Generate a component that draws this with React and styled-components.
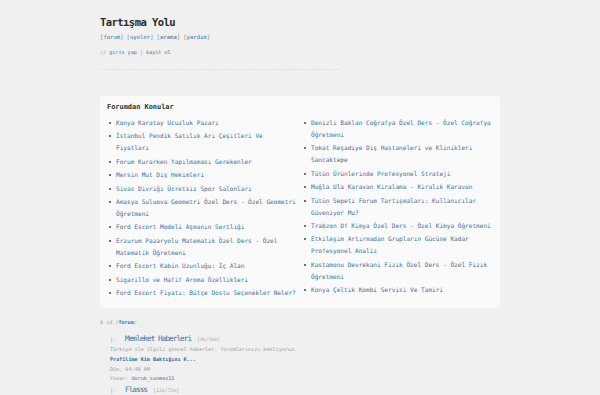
import React from "react";
import styled, { createGlobalStyle } from "styled-components";

const GlobalStyle = createGlobalStyle`
  html, body {
    margin: 0;
    padding: 0;
    background: #f0f0f0;
  }
  body {
    font-family: "DejaVu Sans Mono", "Liberation Mono", monospace;
    color: #333;
  }
`;

const leftTopics = [
  "Konya Karatay Ucuzluk Pazarı",
  "İstanbul Pendik Satılık Arı Çeşitleri Ve Fiyatları",
  "Forum Kurarken Yapılmaması Gerekenler",
  "Mersin Mut Diş Hekimleri",
  "Sivas Divriği Ücretsiz Spor Salonları",
  "Amasya Suluova Geometri Özel Ders - Özel Geometri Öğretmeni",
  "Ford Escort Modeli Aşmanın Sertliği",
  "Erzurum Pazaryolu Matematik Özel Ders - Özel Matematik Öğretmeni",
  "Ford Escort Kabin Uzunluğu: İç Alan",
  "Sigarillo ve Hafif Aroma Özellikleri",
  "Ford Escort Fiyatı: Bütçe Dostu Seçenekler Neler?",
];

const rightTopics = [
  "Denizli Baklan Coğrafya Özel Ders - Özel Coğrafya Öğretmeni",
  "Tokat Reşadiye Diş Hastaneleri ve Klinikleri Sancaktepe",
  "Tütün Ürünlerinde Profesyonel Strateji",
  "Muğla Ula Karavan Kiralama - Kiralık Karavan",
  "Tütün Sepeti Forum Tartışmaları: Kullanıcılar Güveniyor Mu?",
  "Trabzon Of Kimya Özel Ders - Özel Kimya Öğretmeni",
  "Etkileşim Artırmadan Grupların Gücüne Kadar Profesyonel Analiz",
  "Kastamonu Devrekani Fizik Özel Ders - Özel Fizik Öğretmeni",
  "Konya Çeltik Kombi Servisi Ve Tamiri",
];

const Page = styled.div`
  width: 400px;
  margin: 0 auto;
  padding-top: 15px;
`;

const Title = styled.h1`
  margin: 0;
  font-size: 10.5px;
  line-height: 14px;
  font-weight: bold;
  letter-spacing: -0.55px;
  color: #2b2b2b;
`;

const Nav = styled.div`
  margin-top: 4px;
  display: flex;
  gap: 3px;
  font-size: 5.6px;
  line-height: 8px;
  color: #8a8a8a;
`;

const NavLink = styled.a`
  color: #3a6ea5;
  text-decoration: none;
`;

const Auth = styled.div`
  margin-top: 7px;
  font-size: 5.1px;
  line-height: 8px;
  color: #999;
`;

const Divider = styled.div`
  margin-top: 9px;
  font-size: 5px;
  line-height: 8px;
  color: #b4b4b4;
  white-space: nowrap;
  overflow: hidden;
`;

const Card = styled.section`
  margin-top: 23px;
  background: #fafafa;
  border-radius: 3px;
  padding: 6px 7px 8px;
`;

const CardTitle = styled.h2`
  margin: 0;
  font-size: 7px;
  line-height: 10px;
  font-weight: bold;
  letter-spacing: -0.05px;
  color: #333;
`;

const Columns = styled.div`
  margin-top: 5px;
  display: grid;
  grid-template-columns: 191px 191px;
  gap: 4px;
`;

const TopicList = styled.ul`
  list-style: none;
  margin: 0;
  padding: 0;
`;

const Topic = styled.li`
  position: relative;
  padding-left: 9px;
  margin-bottom: 1.4px;
  font-size: 6.1px;
  line-height: 12px;

  &::before {
    content: "";
    position: absolute;
    left: 1.5px;
    top: 5px;
    width: 2px;
    height: 2px;
    border-radius: 50%;
    background: #444;
  }
`;

const TopicLink = styled.a`
  color: #3f6f9f;
  text-decoration: none;
`;

const Path = styled.div`
  margin-top: 10px;
  font-size: 5.1px;
  line-height: 8px;
  color: #999;

  b {
    color: #3a6ea5;
  }
`;

const Forum = styled.div`
  padding-left: 10px;
  margin-top: ${(p) => (p.$first ? "7px" : "0")};
`;

const ForumHead = styled.div`
  display: flex;
  align-items: baseline;
  line-height: 11px;
`;

const Branch = styled.span`
  font-size: 5.5px;
  color: #999;
  width: 15px;
`;

const ForumName = styled.a`
  font-size: 7.6px;
  letter-spacing: -0.9px;
  color: #3a6ea5;
  text-decoration: none;
  margin-right: 6px;
`;

const Count = styled.span`
  font-size: 4.8px;
  color: #aaa;
`;

const Meta = styled.div`
  font-size: 5.1px;
  line-height: 9.7px;
  color: ${(p) => (p.$strong ? "#2f66a3" : "#9a9a9a")};
  font-weight: ${(p) => (p.$strong ? "bold" : "normal")};

  a {
    color: #3a6ea5;
    text-decoration: none;
  }
`;

const navItems = ["forum", "uyeler", "arama", "yardım"];

export default function App() {
  return (
    <>
      <GlobalStyle />
      <Page>
        <Title>Tartışma Yolu</Title>
        <Nav>
          {navItems.map((n) => (
            <span key={n}>
              [<NavLink href="#">{n}</NavLink>]
            </span>
          ))}
        </Nav>
        <Auth>
          // <NavLink href="#">giris yap</NavLink> | <NavLink href="#">kayit ol</NavLink>
        </Auth>
        <Divider>{"-".repeat(80)}</Divider>

        <Card>
          <CardTitle>Forumdan Konular</CardTitle>
          <Columns>
            {[leftTopics, rightTopics].map((col, i) => (
              <TopicList key={i}>
                {col.map((t) => (
                  <Topic key={t}>
                    <TopicLink href="#">{t}</TopicLink>
                  </Topic>
                ))}
              </TopicList>
            ))}
          </Columns>
        </Card>

        <Path>
          $ cd /<b>forum</b>/
        </Path>

        <Forum $first>
          <ForumHead>
            <Branch>|-</Branch>
            <ForumName href="#">Memleket Haberleri</ForumName>
            <Count>[9k/50m]</Count>
          </ForumHead>
          <Meta>Türkiye ile ilgili güncel haberler. Yorumlarınızı bekliyoruz.</Meta>
          <Meta $strong>Profilime Kim Baktığını K...</Meta>
          <Meta>Dün, 04:48 AM</Meta>
          <Meta>
            Yazar: <a href="#">doruk_sonmez11</a>
          </Meta>
        </Forum>
        <Forum>
          <ForumHead>
            <Branch>|-</Branch>
            <ForumName href="#">Flasss</ForumName>
            <Count>[11k/73m]</Count>
          </ForumHead>
        </Forum>
      </Page>
    </>
  );
}
